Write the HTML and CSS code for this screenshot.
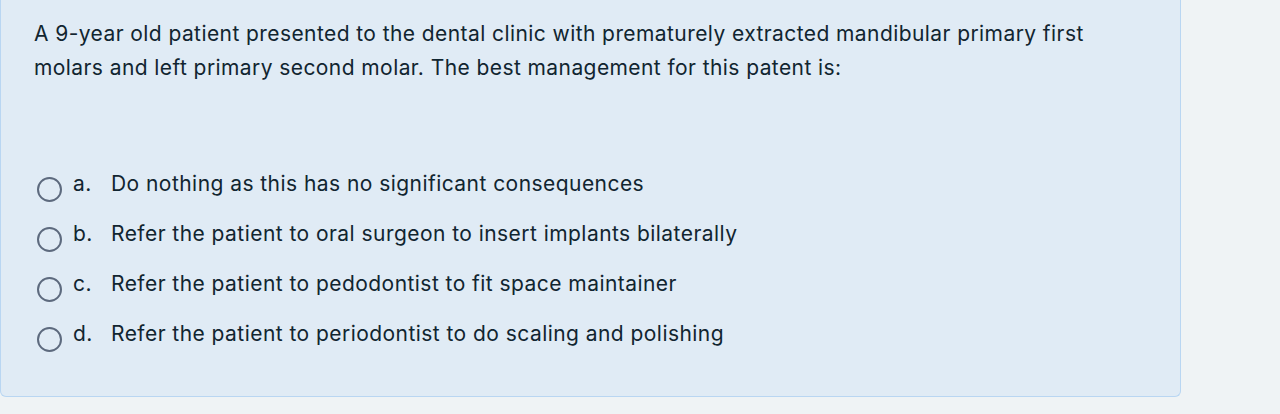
FILE: index.html
```html
<!DOCTYPE html>
<html lang="en">
<head>
<meta charset="utf-8">
<link rel="stylesheet" href="styles.css">
</head>
<body>
<div class="page">
  <div class="formulation">
    <div class="qtext">A 9-year old patient presented to the dental clinic with prematurely extracted mandibular primary first molars and left primary second molar. The best management for this patent is:</div>
    <div class="answers">
      <div class="option"><span class="radio"></span><span class="letter">a.</span><span class="text">Do nothing as this has no significant consequences</span></div>
      <div class="option"><span class="radio"></span><span class="letter">b.</span><span class="text">Refer the patient to oral surgeon to insert implants bilaterally</span></div>
      <div class="option"><span class="radio"></span><span class="letter">c.</span><span class="text">Refer the patient to pedodontist to fit space maintainer</span></div>
      <div class="option"><span class="radio"></span><span class="letter">d.</span><span class="text">Refer the patient to periodontist to do scaling and polishing</span></div>
    </div>
  </div>
</div>
</body>
</html>
```

FILE: styles.css
```css
html, body {
  margin: 0;
  padding: 0;
}
body {
  background: #eff3f5;
  font-family: Inter, "Noto Sans", sans-serif;
  color: #112530;
  width: 1280px;
  height: 414px;
  overflow: hidden;
}
.page {
  padding-bottom: 17px;
}
.formulation {
  width: 1181px;
  height: 397px;
  box-sizing: border-box;
  background: #e0ebf5;
  border: 1px solid #b9d6f2;
  border-top: none;
  border-radius: 0 0 6px 6px;
  padding: 17px 0 0 33px;
}
.qtext {
  font-size: 21px;
  line-height: 34px;
  letter-spacing: 0.42px;
  width: 1090px;
}
.answers {
  margin-top: 73px;
  display: flex;
  flex-direction: column;
}
.option {
  display: flex;
  align-items: center;
  height: 50px;
  font-size: 21px;
  letter-spacing: 0.45px;
}
.radio {
  width: 21px;
  height: 21px;
  border: 2px solid #5d6a7e;
  border-radius: 50%;
  margin-left: 3px;
  margin-right: 11px;
  flex: none;
  position: relative;
  top: 6px;
}
.letter {
  width: 38px;
}
```
